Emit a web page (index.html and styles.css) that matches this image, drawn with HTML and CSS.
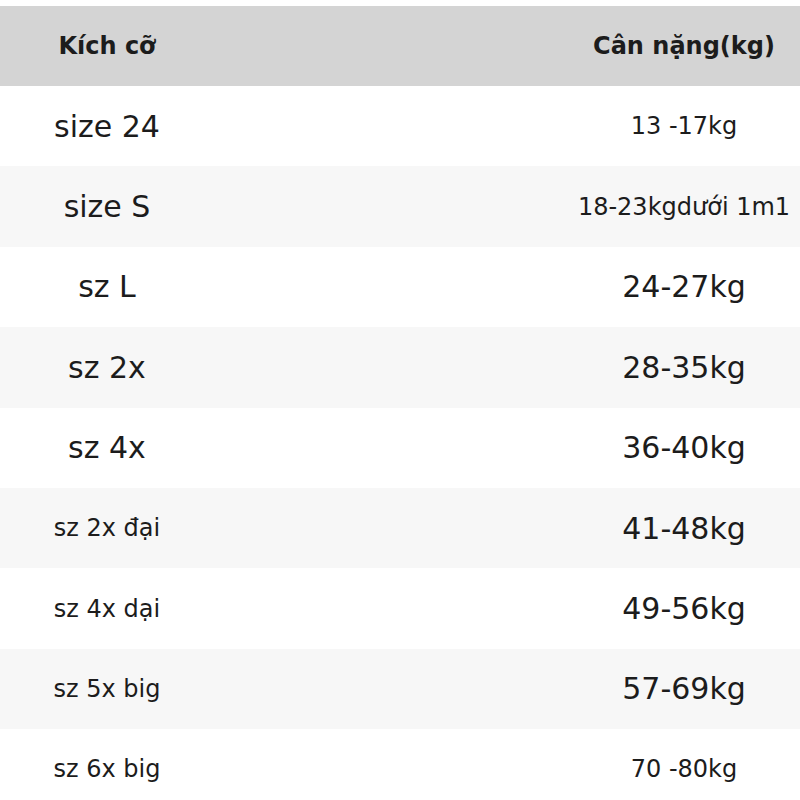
FILE: index.html
```html
<!DOCTYPE html>
<html lang="vi">
<head>
<meta charset="utf-8">
<link rel="stylesheet" href="styles.css">
</head>
<body>
<div class="table">
  <div class="row head"><div class="c1">Kích cỡ</div><div class="c2">Cân nặng(kg)</div></div>
  <div class="row"><div class="c1 big">size 24</div><div class="c2">13 -17kg</div></div>
  <div class="row alt"><div class="c1 big">size S</div><div class="c2">18-23kgdưới 1m1</div></div>
  <div class="row"><div class="c1 big">sz L</div><div class="c2 big">24-27kg</div></div>
  <div class="row alt"><div class="c1 big">sz 2x</div><div class="c2 big">28-35kg</div></div>
  <div class="row"><div class="c1 big">sz 4x</div><div class="c2 big">36-40kg</div></div>
  <div class="row alt"><div class="c1">sz 2x đại</div><div class="c2 big">41-48kg</div></div>
  <div class="row"><div class="c1">sz 4x dại</div><div class="c2 big">49-56kg</div></div>
  <div class="row alt"><div class="c1">sz 5x big</div><div class="c2 big">57-69kg</div></div>
  <div class="row"><div class="c1">sz 6x big</div><div class="c2">70 -80kg</div></div>
</div>
</body>
</html>
```
FILE: styles.css
```css
html, body {
  margin: 0;
  padding: 0;
  background: #ffffff;
}
body {
  padding-top: 6px;
  font-family: "DejaVu Sans", sans-serif;
  color: #1c1c1c;
  overflow: hidden;
}
.table {
  display: flex;
  flex-direction: column;
}
.row {
  display: grid;
  grid-template-columns: 214px 1fr 232px;
  height: 80.4px;
  align-items: center;
  font-size: 24px;
}
.row.head {
  height: 80px;
  background: #d4d4d4;
  font-weight: bold;
}
.row.alt {
  background: #f7f7f7;
}
.c1 {
  grid-column: 1;
  text-align: center;
  white-space: nowrap;
}
.c2 {
  grid-column: 3;
  text-align: center;
  white-space: nowrap;
}
.big {
  font-size: 30px;
}
```
